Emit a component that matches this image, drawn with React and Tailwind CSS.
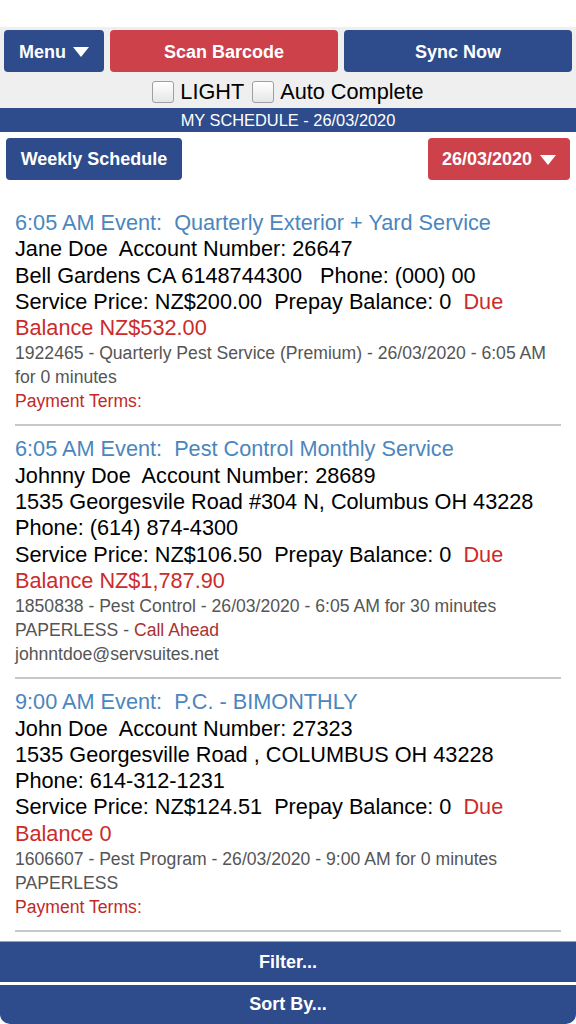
const events = [
  {
    title: "6:05 AM Event:  Quarterly Exterior + Yard Service",
    lines: [
      "Jane Doe  Account Number: 26647",
      "Bell Gardens CA 6148744300   Phone: (000) 00",
    ],
    price: "Service Price: NZ$200.00  Prepay Balance: 0  ",
    balance: "Balance NZ$532.00",
    details: [
      [{ t: "1922465 - Quarterly Pest Service (Premium) - 26/03/2020 - 6:05 AM" }],
      [{ t: "for 0 minutes" }],
      [{ t: "Payment Terms:", red: true }],
    ],
  },
  {
    title: "6:05 AM Event:  Pest Control Monthly Service",
    lines: [
      "Johnny Doe  Account Number: 28689",
      "1535 Georgesvile Road #304 N, Columbus OH 43228",
      "Phone: (614) 874-4300",
    ],
    price: "Service Price: NZ$106.50  Prepay Balance: 0  ",
    balance: "Balance NZ$1,787.90",
    details: [
      [{ t: "1850838 - Pest Control - 26/03/2020 - 6:05 AM for 30 minutes" }],
      [{ t: "PAPERLESS - " }, { t: "Call Ahead", dark: true }],
      [{ t: "johnntdoe@servsuites.net" }],
    ],
  },
  {
    title: "9:00 AM Event:  P.C. - BIMONTHLY",
    lines: [
      "John Doe  Account Number: 27323",
      "1535 Georgesville Road , COLUMBUS OH 43228",
      "Phone: 614-312-1231",
    ],
    price: "Service Price: NZ$124.51  Prepay Balance: 0  ",
    balance: "Balance 0",
    details: [
      [{ t: "1606607 - Pest Program - 26/03/2020 - 9:00 AM for 0 minutes" }],
      [{ t: "PAPERLESS" }],
      [{ t: "Payment Terms:", red: true }],
    ],
  },
];

function Caret() {
  return (
    <svg width="16" height="10" viewBox="0 0 16 10" className="inline-block">
      <polygon points="0,0 16,0 8,10" fill="white" />
    </svg>
  );
}

function Checkbox({ label }) {
  return (
    <label className="flex items-center gap-[6px]">
      <span className="w-[22px] h-[22px] rounded-[3px] border border-[#a0a0a0] bg-gradient-to-b from-white to-[#e6e6e6]" />
      <span>{label}</span>
    </label>
  );
}

export default function App() {
  return (
    <div className="h-[1024px] flex flex-col bg-white font-['Liberation_Sans',Arial,sans-serif] overflow-hidden">
      <div className="h-[27px] bg-white" />
      <div className="bg-[#efefef] pt-[3px]">
        <div className="flex gap-[6px] px-[4px]">
          <button className="w-[100px] h-[42px] pt-[2px] rounded-[4px] bg-[#2e4b8c] text-white font-bold text-[18px] flex items-center justify-center gap-[7px]">
            Menu <Caret />
          </button>
          <button className="flex-1 h-[42px] pt-[2px] rounded-[4px] bg-[#cd414a] text-white font-bold text-[18px]">
            Scan Barcode
          </button>
          <button className="flex-1 h-[42px] pt-[2px] rounded-[4px] bg-[#2e4b8c] text-white font-bold text-[18px]">
            Sync Now
          </button>
        </div>
        <div className="h-[36px] pt-[4px] flex items-center justify-center gap-[8px] text-[21.7px] text-black">
          <Checkbox label="LIGHT" />
          <Checkbox label="Auto Complete" />
        </div>
      </div>
      <div className="h-[24px] pt-[1px] bg-[#2e4b8c] text-white text-[16.4px] flex items-center justify-center">
        MY SCHEDULE - 26/03/2020
      </div>
      <div className="flex justify-between px-[6px] pt-[6px]">
        <button className="w-[176px] h-[42px] pt-[1px] rounded-[4px] bg-[#2e4b8c] text-white font-bold text-[18px]">
          Weekly Schedule
        </button>
        <button className="w-[142px] h-[42px] pt-[1px] rounded-[4px] bg-[#cd414a] text-white font-bold text-[18px] flex items-center justify-center gap-[8px]">
          26/03/2020 <Caret />
        </button>
      </div>
      <div className="flex-1 px-[15px] pt-[30px] overflow-hidden">
        {events.map((e, i) => (
          <div key={i} className={`pb-[11px] border-b-2 border-[#c8c8c8] ${i > 0 ? "pt-[10px]" : ""}`}>
            <div className="text-[21.7px] leading-[26.3px] whitespace-pre">
              <div className="text-[#4a86bd]">{e.title}</div>
              {e.lines.map((l) => (
                <div key={l} className="text-black">{l}</div>
              ))}
              <div className="text-black">
                {e.price}
                <span className="text-[#cc2b2b]">Due</span>
              </div>
              <div className="text-[#cc2b2b]">{e.balance}</div>
            </div>
            <div className="text-[17.6px] leading-[24px] whitespace-pre text-[#555]">
              {e.details.map((row, j) => (
                <div key={j}>
                  {row.map((s, k) => (
                    <span
                      key={k}
                      className={s.red ? "text-[#c02a2a]" : s.dark ? "text-[#a83232]" : ""}
                    >
                      {s.t}
                    </span>
                  ))}
                </div>
              ))}
            </div>
          </div>
        ))}
      </div>
      <div className="bg-white">
        <button className="w-full h-[41px] bg-[#2e4b8c] border-t border-[#8fa3cc] text-white font-bold text-[18px] block">
          Filter...
        </button>
        <button className="w-full h-[39px] mt-[3px] bg-[#2e4b8c] text-white font-bold text-[18px] block rounded-b-[10px]">
          Sort By...
        </button>
      </div>
    </div>
  );
}
